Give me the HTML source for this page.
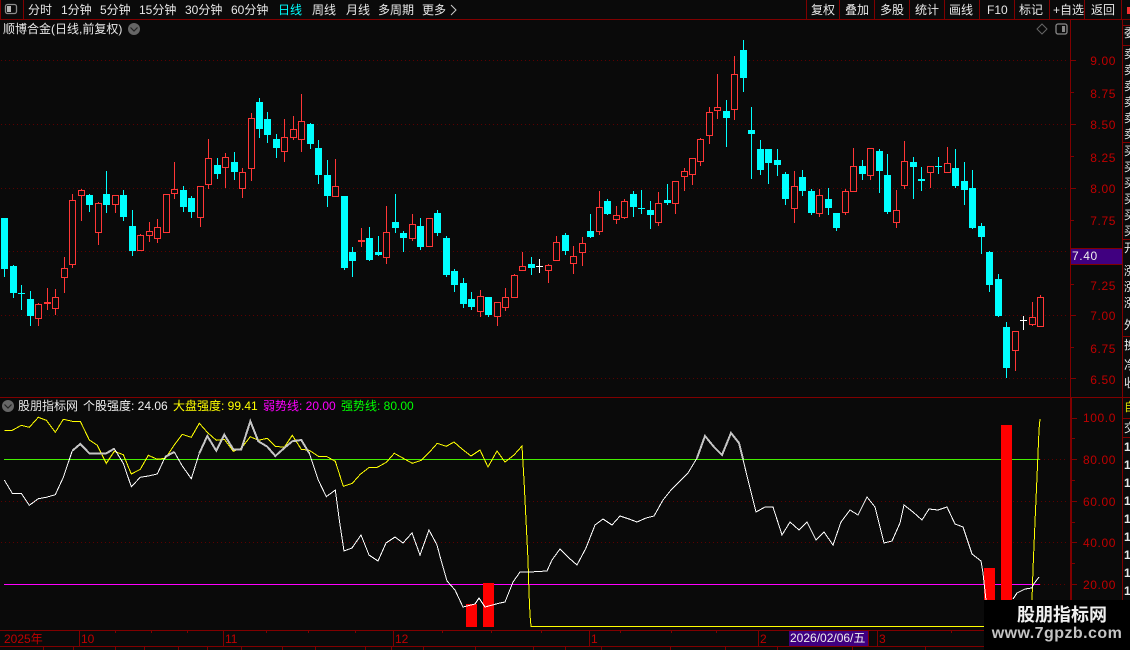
<!DOCTYPE html>
<html><head><meta charset="utf-8"><style>
html,body{margin:0;padding:0;background:#0a0a0a}
#r{position:relative;width:1130px;height:650px;overflow:hidden;background:#0a0a0a;font-family:"WenQuanYi Zen Hei","Liberation Sans","Noto Sans CJK SC",sans-serif;font-size:12px;color:#e8e8e8}
.t{position:absolute;white-space:nowrap;line-height:14px;height:14px}
.a{position:absolute;white-space:nowrap;line-height:14px;color:#c00000;width:44px;text-align:right;left:1072px;font-family:"Liberation Sans",sans-serif;font-size:12px;letter-spacing:.6px}
.l{position:absolute;background:#800000}
.s{position:absolute;left:1124px;width:6px;height:14px;overflow:hidden;line-height:14px;color:#e8e8e8;font-size:12px}
svg{position:absolute;left:0;top:0}
</style></head><body><div id="r">
<svg id="g" width="1130" height="650" viewBox="0 0 1130 650"></svg>

<div class="l" style="left:0;top:19px;width:1130px;height:1px"></div>
<div class="l" style="left:23px;top:0;width:1px;height:19px"></div>
<div class="l" style="left:0;top:0;width:1px;height:19px"></div>
<svg width="24" height="19" style="left:0;top:0"><rect x="5.500" y="4.500" width="11" height="9" rx="2" fill="none" stroke="#8c8c8c" stroke-width="1.300"/><rect x="7" y="6" width="4" height="6" fill="#b8b8b8"/></svg>
<span class="t" style="left:28px;top:3px">分时</span>
<span class="t" style="left:61px;top:3px">1分钟</span>
<span class="t" style="left:100px;top:3px">5分钟</span>
<span class="t" style="left:139px;top:3px">15分钟</span>
<span class="t" style="left:185px;top:3px">30分钟</span>
<span class="t" style="left:231px;top:3px">60分钟</span>
<span class="t" style="left:278px;top:3px;color:#00ffff">日线</span>
<span class="t" style="left:312px;top:3px">周线</span>
<span class="t" style="left:346px;top:3px">月线</span>
<span class="t" style="left:378px;top:3px">多周期</span>
<span class="t" style="left:422px;top:3px">更多</span>
<svg width="10" height="14" style="left:449px;top:3px"><path d="M2 2 L7 7 L2 12" fill="none" stroke="#ccc"/></svg>

<div class="l" style="left:806px;top:0;width:1px;height:19px"></div>
<div class="l" style="left:839px;top:0;width:1px;height:19px"></div>
<div class="l" style="left:874px;top:0;width:1px;height:19px"></div>
<div class="l" style="left:909px;top:0;width:1px;height:19px"></div>
<div class="l" style="left:944px;top:0;width:1px;height:19px"></div>
<div class="l" style="left:979px;top:0;width:1px;height:19px"></div>
<div class="l" style="left:1014px;top:0;width:1px;height:19px"></div>
<div class="l" style="left:1049px;top:0;width:1px;height:19px"></div>
<div class="l" style="left:1084px;top:0;width:1px;height:19px"></div>
<div class="l" style="left:1121px;top:0;width:1px;height:19px"></div>
<span class="t" style="left:811px;top:3px">复权</span>
<span class="t" style="left:845px;top:3px">叠加</span>
<span class="t" style="left:880px;top:3px">多股</span>
<span class="t" style="left:915px;top:3px">统计</span>
<span class="t" style="left:949px;top:3px">画线</span>
<span class="t" style="left:987px;top:3px">F10</span>
<span class="t" style="left:1019px;top:3px">标记</span>
<span class="t" style="left:1053px;top:3px">+自选</span>
<span class="t" style="left:1091px;top:3px">返回</span>
<div style="position:absolute;left:1127px;top:7px;width:3px;height:7px;background:#f03030"></div>

<span class="t" style="left:3px;top:22px">顺博合金(日线,前复权)</span>
<svg width="14" height="14" style="left:127px;top:22px"><circle cx="7" cy="7" r="6" fill="#666"/><path d="M3.5 5.5 L7 9 L10.500 5.500" fill="none" stroke="#222" stroke-width="1.200"/></svg>
<svg width="14" height="14" style="left:1035px;top:22px"><path d="M7 2 L12 7 L7 12 L2 7 Z" fill="none" stroke="#666"/></svg>
<svg width="14" height="14" style="left:1055px;top:22px"><rect x="1" y="2" width="11" height="10" rx="2" fill="none" stroke="#888" stroke-width="1.300"/><rect x="7" y="4" width="3" height="6" fill="#888"/></svg>

<div class="l" style="left:1070px;top:20px;width:1px;height:377px"></div>
<div class="l" style="left:1070px;top:398px;width:2px;height:232px"></div>
<div class="l" style="left:1122px;top:20px;width:1px;height:630px"></div>
<div class="l" style="left:0;top:397px;width:1130px;height:1px"></div>
<div class="l" style="left:0;top:630px;width:984px;height:1px"></div>
<div class="l" style="left:0;top:646px;width:984px;height:1px"></div>

<span class="a" style="top:54px">9.00</span>
<span class="a" style="top:87px">8.75</span>
<span class="a" style="top:118px">8.50</span>
<span class="a" style="top:151px">8.25</span>
<span class="a" style="top:182px">8.00</span>
<span class="a" style="top:214px">7.75</span>
<span class="a" style="top:279px">7.25</span>
<span class="a" style="top:309px">7.00</span>
<span class="a" style="top:342px">6.75</span>
<span class="a" style="top:373px">6.50</span>
<div style="position:absolute;left:1071px;top:248px;width:51px;height:15px;background:#400080;border-top:1px solid #800000;border-bottom:1px solid #800000;color:#eee;font:12px/15px 'Liberation Sans',sans-serif;letter-spacing:.6px"><span style="margin-left:1px">7.40</span></div>

<span class="a" style="top:411px">100.0</span>
<span class="a" style="top:453px">80.00</span>
<span class="a" style="top:495px">60.00</span>
<span class="a" style="top:536px">40.00</span>
<span class="a" style="top:578px">20.00</span>

<svg width="14" height="14" style="left:1px;top:399px"><circle cx="7" cy="7" r="6" fill="#666"/><path d="M3.5 5.5 L7 9 L10.500 5.500" fill="none" stroke="#222" stroke-width="1.200"/></svg>
<span class="t" style="left:18px;top:399px">股朋指标网</span>
<span class="t" style="left:83px;top:399px;color:#f0f0f0">个股强度: 24.06</span>
<span class="t" style="left:173px;top:399px;color:#ffff00">大盘强度: 99.41</span>
<span class="t" style="left:263px;top:399px;color:#ff00ff">弱势线: 20.00</span>
<span class="t" style="left:341px;top:399px;color:#00ff00">强势线: 80.00</span>

<span class="s" style="top:26px">委</span>
<span class="s" style="top:47px">卖</span><span class="s" style="top:63px">卖</span><span class="s" style="top:79px">卖</span><span class="s" style="top:95px">卖</span><span class="s" style="top:111px">卖</span><span class="s" style="top:127px">卖</span>
<span class="s" style="top:144px">买</span><span class="s" style="top:160px">买</span><span class="s" style="top:176px">买</span><span class="s" style="top:192px">买</span><span class="s" style="top:208px">买</span><span class="s" style="top:224px">买</span>
<span class="s" style="top:241px">开</span><span class="s" style="top:264px">涨</span><span class="s" style="top:280px">涨</span><span class="s" style="top:296px">涨</span><span class="s" style="top:318px">外</span>
<span class="s" style="top:338px">换</span><span class="s" style="top:358px">净</span><span class="s" style="top:376px">收</span>
<span class="s" style="top:400px;color:#d8d800">自</span><span class="s" style="top:421px">交</span>
<span class="s" style="top:440px;font-weight:bold">1</span><span class="s" style="top:458px;font-weight:bold">1</span><span class="s" style="top:476px;font-weight:bold">1</span><span class="s" style="top:494px;font-weight:bold">1</span><span class="s" style="top:512px;font-weight:bold">1</span><span class="s" style="top:530px;font-weight:bold">1</span><span class="s" style="top:548px;font-weight:bold">1</span><span class="s" style="top:566px;font-weight:bold">1</span><span class="s" style="top:584px;font-weight:bold">1</span>
<div class="l" style="left:1122px;top:25px;width:8px;height:1px"></div><div class="l" style="left:1122px;top:45px;width:8px;height:1px"></div><div class="l" style="left:1122px;top:142px;width:8px;height:1px"></div><div class="l" style="left:1122px;top:239px;width:8px;height:1px"></div><div class="l" style="left:1122px;top:336px;width:8px;height:1px"></div><div class="l" style="left:1122px;top:418px;width:8px;height:1px"></div><div class="l" style="left:1122px;top:437px;width:8px;height:1px"></div>

<span class="t" style="left:4px;top:632px;color:#c00000">2025年</span>
<span class="t" style="left:81px;top:632px;color:#c00000">10</span>
<span class="t" style="left:225px;top:632px;color:#c00000">11</span>
<span class="t" style="left:395px;top:632px;color:#c00000">12</span>
<span class="t" style="left:591px;top:632px;color:#c00000">1</span>
<span class="t" style="left:760px;top:632px;color:#c00000">2</span>
<span class="t" style="left:879px;top:632px;color:#c00000">3</span>
<div style="position:absolute;left:789px;top:631px;width:78px;height:15px;background:#400080;border-right:1px solid #800000;color:#eee;font-size:12px;line-height:15px;white-space:nowrap;padding-left:1px">2026/02/06/五</div>

<div style="position:absolute;left:984px;top:600px;width:146px;height:50px;background:#000"></div>
<div style="position:absolute;left:1017px;top:604px;width:92px;height:20px;color:#f0f0f0;font:bold 18px/20px 'Noto Sans CJK SC',sans-serif;white-space:nowrap">股朋指标网</div>
<div style="position:absolute;left:990px;top:625px;width:134px;text-align:center;color:#c4c4c4;font:bold 16px/17px 'Liberation Sans',sans-serif;letter-spacing:.45px;white-space:nowrap">www.7gpzb.com</div>
</div>
<script>
var A7=[['c',384,384,537,561],['c',525,528,609,624],['c',585,609,611,660],['c',603,627,678,708],['r',639,642,687,708],['r',594,636,641,660],['r',597,621,657,675],['r',501,534,564,609],['r',312,330,525,534],['r',297,300,318,393],['c',312,315,345,366],['r',336,339,429,465],['c',243,312,345,369],['r',315,315,345,369],['c',300,315,381,393],['c',360,408,483,498],['r',432,435,483,483],['r',396,423,438,456],['r',387,411,447,459],['r',312,312,429,429],['r',216,297,312,327],['c',288,300,351,366],['c',318,324,366,384],['r',288,288,384,411],['r',147,204,285,297],['c',204,225,252,267],['r',189,201,234,294],['c',186,216,246,270],['r',234,246,297,324],['r',69,84,237,273],['c',24,36,117,144],['c',66,87,135,159],['c',132,147,174,204],['r',87,141,186,216],['r',78,117,144,150],['r',12,93,150,186],['c',99,102,162,177],['c',150,174,255,282],['c',210,255,318,351],['r',207,288,321,321],['c',318,318,534,540],['c',471,486,513,561],['r',414,450,456,471],['c',411,444,510,513],['c',438,486,495,498],['r',348,426,504,522],['c',312,396,414,429],['c',423,429,444,486],['r',372,402,447,453],['c',384,408,471,480],['r',384,384,471,471],['c',360,369,429,438],['c',438,444,555,561],['c',537,543,585,606],['c',564,579,642,654],['c',606,627,651,660],['r',600,618,666,681],['c',621,621,675,681],['r',636,636,681,708],['r',594,621,654,663],['r',552,555,624,624],['r',486,528,543,543],['c',501,522,534,555],['w',507,527,530,549],['r',522,525,543,579],['r',438,456,513,513],['c',429,435,483,495],['r',468,498,522,552],['r',441,459,489,528],['c',372,423,441,444],['r',303,351,426,435],['c',327,333,372,375],['r',348,375,390,402],['r',327,333,384,387],['c',303,312,351,381],['c',300,354,357,372],['c',333,360,375,417],['r',306,339,399,408],['c',282,330,339,345],['r',273,273,342,372],['r',234,243,261,303],['r',204,204,255,285]];
var A9=[['r',324,327,396,408],['r',231,246,318,342],['r',132,231,243,267],['c',210,243,264,351],['r',78,132,240,270],['c',30,60,144,186],['c',231,300,312,447],['c',330,357,420,435],['c',357,357,399,462],['c',357,390,405,438],['c',426,432,507,525],['r',423,468,537,579],['c',420,441,483,498],['c',477,483,549,555],['r',477,495,552,561],['c',474,507,534,555],['c',549,549,594,603],['r',477,483,549,555],['r',354,408,486,486],['c',390,408,432,450],['r',354,354,438,450],['c',357,363,423,489],['c',372,435,546,552],['r',480,540,579,594],['r',333,393,468,477],['c',381,396,411,507],['c',411,447,453,483],['r',408,408,429,474],['c',381,408,411,432],['r',351,399,429,429],['c',357,414,468,474],['c',396,453,480,525],['c',420,474,594,597],['c',579,588,621,672],['c',663,666,765,786],['c',732,747,858,861],['c',876,891,1014,1044],['r',903,903,963,1023],['w',858,870,873,900],['r',816,861,885,888],['r',795,801,891,891]];
var W3=[[13,270],[37,310],[64,310],[88,346],[115,326],[139,322],[166,314],[190,262],[217,182],[241,162],[268,190],[292,190],[319,190],[343,176],[370,220],[394,290],[421,262],[445,258],[472,252],[496,200],[523,186],[547,228],[574,266],[598,190],[622,138],[649,182],[673,134],[700,178],[724,178],[751,94],[775,154],[802,170],[826,198],[853,174],[877,154],[904,150],[928,190],[955,270],[979,320],[1006,300],[1018,390]];
var WR=[[344,551],[352,548],[361,535],[369,555],[378,561],[386,543],[395,537],[403,543],[412,533],[420,555],[429,530],[437,545],[441,560],[447,581],[455,590],[463,607],[475,604],[479,598],[485,607],[500,603],[505,602],[513,582],[520,572],[530,572],[547,571],[552,560],[560,549],[569,558],[577,565],[586,548],[595,525],[603,519],[612,525],[620,516],[629,519],[637,522],[646,518],[654,516],[663,500],[671,490],[680,481],[688,473],[697,458],[705,436],[714,447],[722,455],[731,433],[739,443],[748,480],[756,512],[765,507],[773,507],[782,535],[790,522],[799,530],[807,522],[816,540],[824,532],[833,545],[841,522],[850,510],[858,515],[867,497],[875,507],[884,543],[892,541],[900,523],[904,505],[913,512],[922,520],[929,509],[938,510],[947,507],[955,524],[963,527],[972,554],[981,561],[983,573],[986,600]];
var WE=[[1013,599],[1017,593],[1025,589],[1032,588],[1033,585],[1039,577]];
var Y3=[[13,121],[37,121],[64,106],[88,112],[115,82],[139,91],[166,127],[190,88],[217,94],[241,94],[268,150],[292,166],[319,220],[343,184],[370,194],[394,252],[421,238],[445,196],[472,208],[496,205],[523,165],[547,133],[574,142],[598,100],[622,127],[649,151],[673,148],[700,184],[724,175],[751,140],[775,151],[802,145],[826,169],[853,172],[877,136],[904,178],[928,181],[955,199],[979,199],[1006,214],[1030,289],[1057,280],[1081,253],[1108,232],[1132,232],[1159,217],[1183,190],[1210,205],[1237,220],[1264,211],[1288,187],[1312,160],[1339,169]];
var YR=[[454,442],[462,449],[471,456],[480,450],[488,467],[497,451],[505,462],[514,455],[522,446],[524,480],[528,560],[529,593],[530,615],[531,626.500],[1032,626.500],[1032,600],[1033,569],[1035,522],[1037,477],[1039,430],[1040,419]];
var s='',RED='#ff3636',CY='#00ffff';
function R(x,y,w,h,f){s+='<rect x="'+x+'" y="'+y+'" width="'+w+'" height="'+h+'" fill="'+f+'"/>';}
function dots(y,x0,x1){s+='<line x1="'+x0+'" x2="'+x1+'" y1="'+(y+.5)+'" y2="'+(y+.5)+'" stroke="#5c0000" stroke-dasharray="1 3"/>';}
[60,124,188,251,315,378].forEach(function(y){dots(y,1,1066);R(1071,y,5,1,'#800000');});
[92,156,220,284,347].forEach(function(y){R(1071,y,3,1,'#800000');});
[501,542].forEach(function(y){dots(y,1,1066);});
dots(459,1040,1066);dots(584,1040,1066);
[418,459,501,542,584].forEach(function(y){R(1072,y,5,1,'#800000');});
[438,480,522,563].forEach(function(y){R(1072,y,3,1,'#800000');});
function cd(d,i,base){var k=d[0],c=k=='c'?CY:k=='w'?'#fff':RED,x=Math.round(4.3+8.49*i),
 h=Math.round(base+d[1]/3),t=Math.round(base+d[2]/3),b=Math.round(base+d[3]/3),l=Math.round(base+d[4]/3);
 if(b-t<=2){R(x,h,1,l-h,c);R(x-3,t,7,Math.max(1,b-t),c);return;}
 if(k=='c'){R(x,h,1,l-h,c);R(x-3,t,7,b-t,c);}
 else{R(x,h,1,t-h,c);R(x,b,1,l-b,c);s+='<rect x="'+(x-2.5)+'" y="'+(t+.5)+'" width="6" height="'+(b-t-1)+'" fill="#0a0a0a" stroke="'+c+'" stroke-width="1"/>';}
}
A7.forEach(function(d,i){cd(d,i,90);});
A9.forEach(function(d,i){cd(d,i+82,30);});
R(4,459,1036,1,'#44ee00');
R(4,584,1036,1,'#ff00ff');
R(466,604,11,23,'#ff0000');R(483,583,11,44,'#ff0000');R(984,568,11,32,'#ff0000');R(1001,425,11,175,'#ff0000');
function p3(a){return a.map(function(q){return (q[0]/3).toFixed(1)+','+(390+q[1]/3).toFixed(1);});}
function pl(pts,c,w){s+='<polyline points="'+pts.join(' ')+'" fill="none" stroke="'+c+'" stroke-width="'+w+'" stroke-linejoin="miter" shape-rendering="crispEdges"/>';}
var yp=p3(Y3).concat(YR.map(function(q){return q.join(',');}));
pl(yp,'#ffff00',1);
var wp=p3(W3);
pl(wp.slice(0,41).concat(WR.map(function(q){return q.join(',');})),'#ffffff',1);
pl(WE.map(function(q){return q.join(',');}),'#ffffff',1);
pl(wp.slice(8,14),'#c4c4c4',2);pl(wp.slice(19,21),'#c4c4c4',2);pl(wp.slice(23,37),'#c4c4c4',2);
pl(['697,458','705,436','714,447','722,455','731,433','739,443','743,459'],'#c4c4c4',2);
[79,223,393,589,758,877].forEach(function(x){R(x,631,1,15,'#800000');});
[115,151,187,266,308,355,442,491,541,620,671,716,800,842,951,988].forEach(function(x){R(x,631,1,2,'#800000');});
[43,73,115,144,178,207,241,282,315,365,391,423,475,533,565,601,670,725,777,852,925,1000].forEach(function(x){R(x,647,1,3,'#800000');});
document.getElementById('g').innerHTML=s;
</script>
</body></html>
